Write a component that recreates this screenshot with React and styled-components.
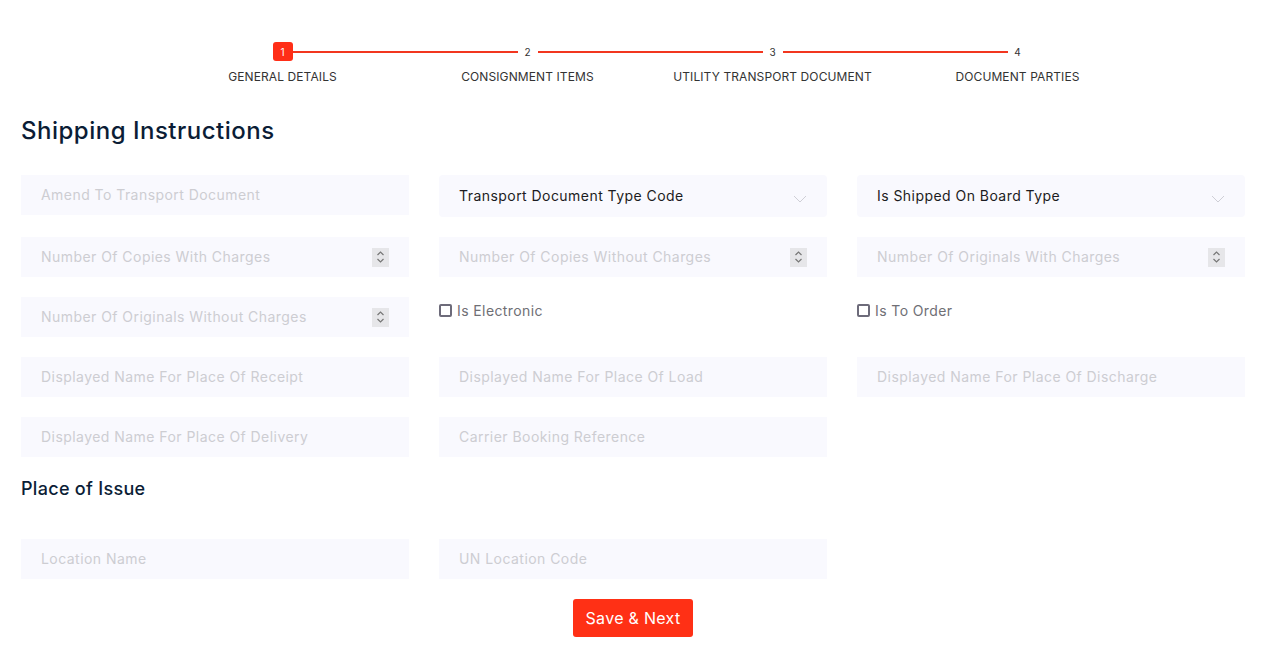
import React from "react";
import styled, { createGlobalStyle } from "styled-components";

const GlobalStyle = createGlobalStyle`
  body {
    margin: 0;
    background: #fff;
    font-family: Inter, "Open Sans", sans-serif;
  }
  * { box-sizing: border-box; }
`;

const Page = styled.div`
  width: 1280px;
  padding: 42px 35px 0 21px;
`;

const Stepper = styled.div`
  display: grid;
  grid-template-columns: repeat(4, 245px);
  margin-left: 139px;
`;

const Step = styled.div`
  display: flex;
  flex-direction: column;
  align-items: center;
  position: relative;
`;

const StepNum = styled.div`
  position: relative;
  z-index: 1;
  width: 20px;
  height: 19px;
  border-radius: 3px;
  display: flex;
  align-items: center;
  justify-content: center;
  font-size: 10px;
  color: ${p => (p.active ? "#fff" : "#333")};
  background: ${p => (p.active ? "#ff2e17" : "#fff")};
`;

const Line = styled.div`
  position: absolute;
  top: 9px;
  left: calc(50% + 10px);
  width: 225px;
  height: 2px;
  background: #f2361f;
`;

const StepLabel = styled.div`
  margin-top: 8px;
  font-size: 12px;
  color: #333;
  text-transform: uppercase;
  white-space: nowrap;
  letter-spacing: 0.1px;
`;

const Title = styled.h1`
  margin: 30px 0 0;
  font-size: 24px;
  font-weight: 500;
  color: #0b1d36;
  line-height: 34px;
  letter-spacing: 0.5px;
`;

const Grid = styled.div`
  display: grid;
  grid-template-columns: repeat(3, 388px);
  column-gap: 30px;
  row-gap: 20px;
  margin-top: ${p => p.top || 0}px;
  align-items: start;
`;

const Field = styled.div`
  height: ${p => (p.tall ? 42 : 40)}px;
  background: #f9f9fe;
  border-radius: ${p => (p.tall ? 4 : 0)}px;
  display: flex;
  align-items: center;
  padding: 0 20px 2px;
  font-size: 14px;
  letter-spacing: 0.45px;
  color: ${p => (p.filled ? "#1c1c22" : "#cdcdd2")};
  font-weight: 400;
  white-space: nowrap;
`;

const Label = styled.span`
  flex: 1;
`;

const Spin = styled.div`
  width: 17px;
  height: 19px;
  margin-top: 2px;
  background: #e6e6e9;
  display: flex;
  align-items: center;
  justify-content: center;
`;

const CheckRow = styled.label`
  height: 40px;
  display: flex;
  align-items: flex-start;
  padding-top: 5px;
  gap: 5px;
  font-size: 14px;
  letter-spacing: 0.4px;
  color: #6f6f75;
`;

const Box = styled.span`
  width: 13px;
  height: 13px;
  margin-top: 2px;
  border: 2px solid #6d6b7a;
  border-radius: 2px;
`;

const SubTitle = styled.h2`
  margin: 20px 0 0;
  font-size: 18px;
  font-weight: 500;
  color: #0b1d36;
  line-height: 24px;
  letter-spacing: 0.3px;
`;

const Footer = styled.div`
  width: 1224px;
  display: flex;
  justify-content: center;
  margin-top: 20px;
`;

const Button = styled.button`
  width: 120px;
  height: 38px;
  border: none;
  border-radius: 3px;
  background: #ff3015;
  color: #fff;
  font-family: inherit;
  font-size: 16px;
  letter-spacing: 0.3px;
`;

const Chevron = () => (
  <svg width="14" height="8" viewBox="0 0 14 8" style={{ marginTop: 8 }}>
    <path d="M1 1l6 6 6-6" fill="none" stroke="#cfcfd6" strokeWidth="1" />
  </svg>
);

const Spinner = () => (
  <Spin>
    <svg width="9" height="14" viewBox="0 0 9 14">
      <path d="M1.5 5l3-3 3 3M1.5 9l3 3 3-3" fill="none" stroke="#777" strokeWidth="1.2" />
    </svg>
  </Spin>
);

const steps = ["General Details", "Consignment Items", "Utility Transport Document", "Document Parties"];

const Input = ({ label, spin, select }) => (
  <Field tall={select} filled={select}>
    <Label>{label}</Label>
    {spin && <Spinner />}
    {select && <Chevron />}
  </Field>
);

const Check = ({ label }) => (
  <CheckRow>
    <Box />
    {label}
  </CheckRow>
);

export default function App() {
  return (
    <Page>
      <GlobalStyle />
      <Stepper>
        {steps.map((s, i) => (
          <Step key={s}>
            {i < 3 && <Line />}
            <StepNum active={i === 0}>{i + 1}</StepNum>
            <StepLabel>{s}</StepLabel>
          </Step>
        ))}
      </Stepper>
      <Title>Shipping Instructions</Title>
      <Grid top={27}>
        <Input label="Amend To Transport Document" />
        <Input label="Transport Document Type Code" select />
        <Input label="Is Shipped On Board Type" select />
        <Input label="Number Of Copies With Charges" spin />
        <Input label="Number Of Copies Without Charges" spin />
        <Input label="Number Of Originals With Charges" spin />
        <Input label="Number Of Originals Without Charges" spin />
        <Check label="Is Electronic" />
        <Check label="Is To Order" />
        <Input label="Displayed Name For Place Of Receipt" />
        <Input label="Displayed Name For Place Of Load" />
        <Input label="Displayed Name For Place Of Discharge" />
        <Input label="Displayed Name For Place Of Delivery" />
        <Input label="Carrier Booking Reference" />
      </Grid>
      <SubTitle>Place of Issue</SubTitle>
      <Grid top={38}>
        <Input label="Location Name" />
        <Input label="UN Location Code" />
      </Grid>
      <Footer>
        <Button>Save &amp; Next</Button>
      </Footer>
    </Page>
  );
}
